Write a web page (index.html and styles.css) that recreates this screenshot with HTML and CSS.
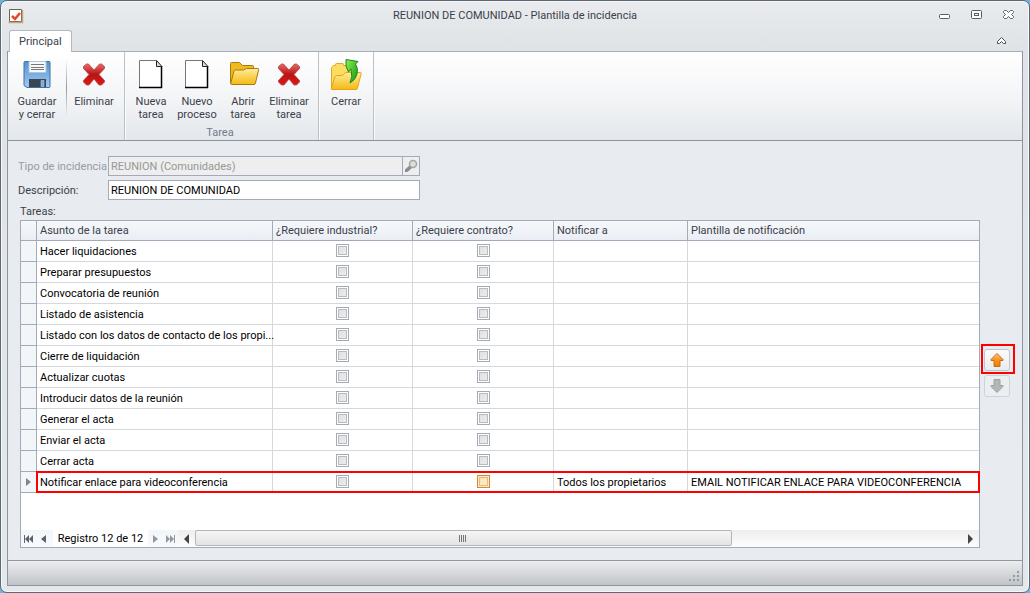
FILE: index.html
```html
<!DOCTYPE html>
<html lang="es">
<head>
    <meta charset="UTF-8">
    <meta name="viewport" content="width=device-width, initial-scale=1.0">
    <title>REUNION DE COMUNIDAD - Plantilla de incidencia</title>
    <link rel="stylesheet" href="styles.css">
</head>
<body>
    <!-- Shared icons -->
    <svg class="defs" width="0" height="0" aria-hidden="true">
        <defs>
            <linearGradient id="red" x1="0" y1="0" x2="0" y2="1">
                <stop offset="0" stop-color="#e86a6a"/>
                <stop offset=".5" stop-color="#b81414"/>
                <stop offset="1" stop-color="#e01818"/>
            </linearGradient>
            <linearGradient id="blue" x1="0" y1="0" x2="0" y2="1">
                <stop offset="0" stop-color="#5592cc"/>
                <stop offset="1" stop-color="#9ecbf5"/>
            </linearGradient>
            <linearGradient id="gold" x1="0" y1="0" x2="0" y2="1">
                <stop offset="0" stop-color="#ffec9a"/>
                <stop offset="1" stop-color="#f5b912"/>
            </linearGradient>
            <linearGradient id="green" x1="0" y1="0" x2="1" y2="1">
                <stop offset="0" stop-color="#8ff04a"/>
                <stop offset="1" stop-color="#12901a"/>
            </linearGradient>
            <linearGradient id="orange" x1="0" y1="0" x2="0" y2="1">
                <stop offset="0" stop-color="#fbc48a"/>
                <stop offset=".5" stop-color="#f7941d"/>
                <stop offset="1" stop-color="#ee7d00"/>
            </linearGradient>
        </defs>
        <symbol id="icon-delete" viewBox="0 0 32 32">
            <path d="M5.500 7.500l3-2.500h2l5.500 6 5.500-6h2l3 2.500v2L21 15.500l5.500 6v1.500l-3 3h-2.500l-5-6-5 6H8.500l-3-3v-1.500l5.500-6-5.500-6z" fill="url(#red)" stroke="#b04545" stroke-width=".8"/>
        </symbol>
        <symbol id="icon-page" viewBox="0 0 32 32">
            <path d="M4.500 1.500h17l5 6v21h-22z" fill="#fff"/>
            <path d="M4.500 28V1.500H21" fill="none" stroke="#777"/>
            <path d="M4 28.500h23M26.500 29V7" fill="none" stroke="#000" stroke-width="1.500"/>
            <path d="M21.500 1.500v6h5.500z" fill="#ddd" stroke="#222"/>
        </symbol>
    </svg>

    <div class="window">
        <div class="titlebar">
            <svg class="app-icon" width="16" height="16" viewBox="0 0 16 16">
                <path d="M1.500 1.500h12v12h-12z" fill="#fff" stroke="#6f6250"/>
                <path d="M.5 14.500h14V2" fill="none" stroke="#c2a676" stroke-width="1.500"/>
                <path d="M4 8l3 3 5-6" fill="none" stroke="#e8442a" stroke-width="2.500"/>
            </svg>
            <h1>REUNION DE COMUNIDAD - Plantilla de incidencia</h1>
            <div class="window-buttons">
                <button aria-label="Minimizar"><svg width="12" height="12"><rect x=".5" y="4.500" width="10" height="4" rx="1" fill="#fff" stroke="#555d66"/></svg></button>
                <button aria-label="Maximizar"><svg width="12" height="12"><rect x=".5" y=".5" width="10" height="8" rx="1" fill="#fff" stroke="#555d66"/><rect x="3.500" y="3.500" width="4" height="2" fill="#fff" stroke="#555d66"/></svg></button>
                <button aria-label="Cerrar ventana"><svg width="12" height="12"><path d="M.5 1.500l1-1h2l2 2 2-2h2l1 1v1l-2 2 2 2v1l-1 1h-2l-2-2-2 2h-2l-1-1v-1l2-2-2-2z" fill="#fff" stroke="#555d66"/></svg></button>
            </div>
        </div>

        <div class="tabs">
            <button class="tab">Principal</button>
            <button class="collapse" aria-label="Contraer cinta"><svg width="10" height="8"><path d="M.5 4.500l4-4 4 4v2H6.500l-2-2-2 2H.5z" fill="#fff" stroke="#444c55"/></svg></button>
        </div>

        <div class="panel">
            <div class="ribbon">
                <div class="group">
                    <div class="group-items">
                        <button class="tool tool-save">
                            <svg width="32" height="32" viewBox="0 0 32 32">
                                <path d="M4 2.500h24q1 0 1 1v24q0 1-1 1H6l-3-2V3.500q0-1 1-1z" fill="url(#blue)" stroke="#43719f"/>
                                <path d="M8 2.500h17v11H8z" fill="#f6f8fa" stroke="#adc5dd"/>
                                <path d="M10 5.500h13M10 8.500h13M10 10.500h13" stroke="#777"/>
                                <path d="M8 20h17v8H8z" fill="#3c4650"/>
                                <path d="M20 21.500h3v6h-3z" fill="#6ca7dd" stroke="#cde4f7" stroke-width=".5"/>
                            </svg>
                            <span>Guardar<br>y cerrar</span>
                        </button>
                        <span class="divider"></span>
                        <button class="tool tool-delete">
                            <svg width="32" height="32"><use href="#icon-delete"/></svg>
                            <span>Eliminar</span>
                        </button>
                    </div>
                </div>
                <div class="group group-tasks">
                    <div class="group-items">
                        <button class="tool"><svg width="32" height="32"><use href="#icon-page"/></svg><span>Nueva<br>tarea</span></button>
                        <button class="tool"><svg width="32" height="32"><use href="#icon-page"/></svg><span>Nuevo<br>proceso</span></button>
                        <button class="tool">
                            <svg width="32" height="32" viewBox="0 0 32 32">
                                <path d="M3.500 24V4.500q0-1 1-1h8l3 3h10q1 0 1 1v16z" fill="#f0b91c" stroke="#a87a10"/>
                                <path d="M4.500 25.500q-1 0-.8-1L7 12q.3-1 1.500-1h8l3-1.500h11.500q1 0 .7 1L28.500 24q-.3 1.500-1.500 1.500z" fill="url(#gold)" stroke="#a87a10"/>
                            </svg>
                            <span>Abrir<br>tarea</span>
                        </button>
                        <button class="tool"><svg width="32" height="32"><use href="#icon-delete"/></svg><span>Eliminar<br>tarea</span></button>
                    </div>
                    <div class="group-title">Tarea</div>
                </div>
                <div class="group">
                    <div class="group-items">
                        <button class="tool tool-close">
                            <svg width="32" height="32" viewBox="0 0 32 32">
                                <path d="M1.500 29V8.500l2-2h2v-1q0-1 1-1h6q1 0 1 1v1h9q1 0 1 1V29z" fill="#fddc62" stroke="#e0a820"/>
                                <path d="M2 30.500q-1 0-.7-1L5 17.500q.3-1 1.500-1h6l3-3h15q1 0 .7 1L27.500 29q-.4 1.500-1.500 1.500z" fill="url(#gold)" stroke="#e5a31a"/>
                                <path d="M16 7V.5l12 2-2.500 2.500q3 4 1.500 10-1.500 6-7 9 3-6 1-14l-2.500 3z" fill="url(#green)" stroke="#168a1a"/>
                            </svg>
                            <span>Cerrar</span>
                        </button>
                    </div>
                </div>
            </div>

            <div class="client">
                <form class="fields">
                    <label class="disabled" for="tipo">Tipo de incidencia</label>
                    <div class="lookup">
                        <input id="tipo" type="text" value="REUNION (Comunidades)" disabled>
                        <button type="button" aria-label="Buscar" disabled>
                            <svg width="14" height="14"><path d="M1 12.500v-2L6 6l2.500 2.500L3.500 13H1z" fill="#8c8c8c"/><circle cx="9" cy="5" r="3.500" fill="#ddd" stroke="#a5a5a5" stroke-width="1.500"/></svg>
                        </button>
                    </div>
                    <label for="descripcion">Descripción:</label>
                    <input id="descripcion" type="text" value="REUNION DE COMUNIDAD">
                </form>
                <div class="tasks-label" id="tareas">Tareas:</div>

                <div class="tasks">
                    <div class="grid">
                        <table aria-labelledby="tareas">
                            <colgroup>
                                <col class="col-mark"><col class="col-name"><col class="col-ind"><col class="col-con"><col class="col-notify"><col>
                            </colgroup>
                            <thead>
                                <tr><th></th><th>Asunto de la tarea</th><th>¿Requiere industrial?</th><th>¿Requiere contrato?</th><th>Notificar a</th><th>Plantilla de notificación</th></tr>
                            </thead>
                            <tbody>
                                <tr><td></td><td>Hacer liquidaciones</td><td><input type="checkbox" aria-label="Requiere industrial"></td><td><input type="checkbox" aria-label="Requiere contrato"></td><td></td><td></td></tr>
                                <tr><td></td><td>Preparar presupuestos</td><td><input type="checkbox" aria-label="Requiere industrial"></td><td><input type="checkbox" aria-label="Requiere contrato"></td><td></td><td></td></tr>
                                <tr><td></td><td>Convocatoria de reunión</td><td><input type="checkbox" aria-label="Requiere industrial"></td><td><input type="checkbox" aria-label="Requiere contrato"></td><td></td><td></td></tr>
                                <tr><td></td><td>Listado de asistencia</td><td><input type="checkbox" aria-label="Requiere industrial"></td><td><input type="checkbox" aria-label="Requiere contrato"></td><td></td><td></td></tr>
                                <tr><td></td><td>Listado con los datos de contacto de los propi...</td><td><input type="checkbox" aria-label="Requiere industrial"></td><td><input type="checkbox" aria-label="Requiere contrato"></td><td></td><td></td></tr>
                                <tr><td></td><td>Cierre de liquidación</td><td><input type="checkbox" aria-label="Requiere industrial"></td><td><input type="checkbox" aria-label="Requiere contrato"></td><td></td><td></td></tr>
                                <tr><td></td><td>Actualizar cuotas</td><td><input type="checkbox" aria-label="Requiere industrial"></td><td><input type="checkbox" aria-label="Requiere contrato"></td><td></td><td></td></tr>
                                <tr><td></td><td>Introducir datos de la reunión</td><td><input type="checkbox" aria-label="Requiere industrial"></td><td><input type="checkbox" aria-label="Requiere contrato"></td><td></td><td></td></tr>
                                <tr><td></td><td>Generar el acta</td><td><input type="checkbox" aria-label="Requiere industrial"></td><td><input type="checkbox" aria-label="Requiere contrato"></td><td></td><td></td></tr>
                                <tr><td></td><td>Enviar el acta</td><td><input type="checkbox" aria-label="Requiere industrial"></td><td><input type="checkbox" aria-label="Requiere contrato"></td><td></td><td></td></tr>
                                <tr><td></td><td>Cerrar acta</td><td><input type="checkbox" aria-label="Requiere industrial"></td><td><input type="checkbox" aria-label="Requiere contrato"></td><td></td><td></td></tr>
                                <tr class="current"><td><svg width="5" height="8"><path d="M0 0l5 4-5 4z" fill="#7d8590"/></svg></td><td>Notificar enlace para videoconferencia</td><td><input type="checkbox" aria-label="Requiere industrial"></td><td><input class="hot" type="checkbox" aria-label="Requiere contrato"></td><td>Todos los propietarios</td><td>EMAIL NOTIFICAR ENLACE PARA VIDEOCONFERENCIA</td></tr>
                            </tbody>
                        </table>

                        <div class="navigator">
                            <button aria-label="Primero"><svg width="10" height="8"><path d="M0 0h1v8H0zM5 0v8L1 4zM9 0v8L5 4z" fill="#5a626c"/></svg></button>
                            <button aria-label="Anterior"><svg width="5" height="8"><path d="M5 0v8L0 4z" fill="#5a626c"/></svg></button>
                            <span class="record">Registro 12 de 12</span>
                            <button aria-label="Siguiente" disabled><svg width="5" height="8"><path d="M0 0l5 4-5 4z" fill="#9299a2"/></svg></button>
                            <button aria-label="Último" disabled><svg width="10" height="8"><path d="M0 0l4 4-4 4zM4 0l4 4-4 4zM8 0h1v8H8z" fill="#9299a2"/></svg></button>
                            <div class="scrollbar">
                                <button aria-label="Desplazar a la izquierda"><svg width="5" height="10"><path d="M5 0v10L0 5z" fill="#444"/></svg></button>
                                <div class="track"><div class="thumb"><svg width="8" height="7"><path d="M.5 0v7M2.500 0v7M4.500 0v7M6.500 0v7" stroke="#777"/></svg></div></div>
                                <button aria-label="Desplazar a la derecha"><svg width="5" height="10"><path d="M0 0v10l5-5z" fill="#444"/></svg></button>
                            </div>
                        </div>
                    </div>

                    <div class="move">
                        <div class="highlight">
                            <button aria-label="Subir"><svg width="14" height="14"><path d="M7 .5l6 6v1h-3v6H4v-6H1v-1z" fill="url(#orange)" stroke="#c96f12"/></svg></button>
                        </div>
                        <button aria-label="Bajar" disabled><svg width="14" height="14"><path d="M7 13.500l6-6v-1h-3v-6H4v6H1v1z" fill="#b5b5b5" stroke="#a0a0a0"/></svg></button>
                    </div>
                </div>
            </div>

            <div class="statusbar">
                <svg width="11" height="11"><path d="M8 0h2v2H8zM4 4h2v2H4zM8 4h2v2H8zM0 8h2v2H0zM4 8h2v2H4zM8 8h2v2H8z" fill="#9498a0"/></svg>
            </div>
        </div>
    </div>
</body>
</html>
```
FILE: styles.css
```css
* {
    margin: 0;
    padding: 0;
    box-sizing: border-box;
}

body {
    font-family: Tahoma, Roboto, 'DejaVu Sans', sans-serif;
    font-size: 11px;
    line-height: 13px;
    color: #3b3f4a;
    background: #69b3e8;
}

button,
input {
    font: inherit;
    color: inherit;
}

button {
    background: none;
    border: none;
}

svg {
    display: block;
}

.defs {
    position: absolute;
}

/* window frame */
.window {
    display: flex;
    flex-direction: column;
    min-height: 100vh;
    padding: 0 6px 6px;
    border: 1px solid #5e6874;
    border-radius: 7px;
    background: linear-gradient(#e9ebee, #dfe3e6 50px, #e3e8eb);
    box-shadow: inset 0 0 0 1px #f7f8f9;
}

.titlebar {
    display: grid;
    grid-template-columns: 80px 1fr 80px;
    align-items: center;
    height: 29px;
}

.app-icon {
    margin-left: 1px;
}

.titlebar h1 {
    font-size: 11px;
    font-weight: normal;
    text-align: center;
}

.window-buttons {
    display: flex;
    justify-content: flex-end;
    gap: 20px;
    padding-right: 8px;
}

.tabs {
    display: flex;
    justify-content: space-between;
    height: 21px;
    padding: 0 16px 0 2px;
}

.tab {
    position: relative;
    height: 22px;
    padding: 0 9px;
    background: #fff;
    border: 1px solid #b3b9c1;
    border-bottom: none;
    border-radius: 3px 3px 0 0;
    z-index: 1;
}

.panel {
    flex: 1;
    display: flex;
    flex-direction: column;
    border: 1px solid #8c95a0;
    border-top-color: #a9afb7;
}

/* ribbon */
.ribbon {
    display: flex;
    height: 89px;
    background: linear-gradient(#fff, #f4f5f7 50%, #e3e7eb);
    border-bottom: 1px solid #8b939d;
}

.group {
    display: flex;
    flex-direction: column;
    justify-content: space-between;
    padding: 7px 3px 1px;
    border-right: 1px solid #bcc1c8;
    box-shadow: 1px 0 #fafbfc;
}

.group-tasks {
    padding-right: 6px;
}

.group-items {
    display: flex;
}

.tool {
    display: flex;
    flex-direction: column;
    align-items: center;
    gap: 4px;
    width: 46px;
    text-align: center;
}

.tool-save {
    width: 52px;
}

.tool-delete {
    width: 54px;
}

.tool-close {
    width: 48px;
}

.divider {
    width: 1px;
    height: 58px;
    margin-left: 3px;
    background: linear-gradient(transparent, #9298a1, transparent);
}

.group-title {
    text-align: center;
    color: #737990;
}

/* form */
.client {
    flex: 1;
    display: flex;
    flex-direction: column;
    padding: 15px 7px 12px 12px;
    background: #e8ebf0;
}

.fields {
    display: grid;
    grid-template-columns: 90px 312px;
    row-gap: 4px;
    align-items: center;
    margin-left: -2px;
    white-space: nowrap;
}

.fields .disabled {
    color: #979ba3;
}

.fields input {
    height: 20px;
    padding: 0 2px;
    border: 1px solid #a3abb8;
    background: #fff;
    color: #000;
    min-width: 0;
}

.fields .lookup input {
    flex: 1;
    background: #eee;
    color: #979797;
}

.lookup {
    display: flex;
}

.lookup button {
    width: 17px;
    padding-left: 1px;
    border: 1px solid #a3abb8;
    border-left: none;
    background: #eee;
}

.tasks-label {
    margin: 5px 0 2px;
}

/* task table */
.tasks {
    flex: 1;
    display: flex;
    gap: 1px;
}

.grid {
    flex: 1;
    display: flex;
    flex-direction: column;
    justify-content: space-between;
    border: 1px solid #a3abb8;
    background: #fff;
}

table {
    width: 100%;
    table-layout: fixed;
    border-collapse: separate;
    border-spacing: 0;
}

.col-mark { width: 16px; }
.col-name { width: 236px; }
.col-ind { width: 140px; }
.col-con { width: 141px; }
.col-notify { width: 134px; }

th,
td {
    height: 21px;
    padding: 0 0 0 3px;
    white-space: nowrap;
    text-align: left;
}

th {
    height: 20px;
    font-weight: normal;
    background: linear-gradient(#f6f8fb, #eaeef4);
    border-right: 1px solid #a3abb8;
    border-bottom: 1px solid #a3abb8;
}

td {
    color: #000;
    border-right: 1px solid #d5d9dd;
    border-bottom: 1px solid #d5d9dd;
}

th:last-child,
td:last-child {
    border-right: none;
}

td:first-child {
    padding: 0 5px;
    background: #f3f6f9;
    border-color: #a3abb8;
}

td:nth-child(3),
td:nth-child(4) {
    padding: 0 0 2px;
}

input[type="checkbox"] {
    appearance: none;
    display: block;
    width: 13px;
    height: 13px;
    margin: 0 auto;
    border: 1px solid #a3abb8;
    background: linear-gradient(135deg, #ddd, #f0f0f0);
    box-shadow: inset 0 0 0 1px #fff, inset 0 0 0 2px #bbb;
}

input[type="checkbox"].hot {
    border-color: #cc8e35;
    background: linear-gradient(135deg, #fbe0b0, #fdf1d8);
    box-shadow: inset 0 0 0 1px #fdeccb, inset 0 0 0 2px #f3b573;
}

/* red frame over the current row */
.current {
    position: relative;
}

.current td:last-child::after {
    content: '';
    position: absolute;
    inset: -1px -1px 0 15px;
    border: 2px solid #f00;
    pointer-events: none;
}

/* record navigator and scrollbar */
.navigator {
    display: flex;
    height: 17px;
    background: linear-gradient(#f3f6f9, #f8fafc);
}

.navigator button {
    display: flex;
    align-items: center;
    justify-content: center;
    width: 15px;
}

.navigator .scrollbar button {
    width: 17px;
}

.record {
    width: 95px;
    margin-left: 2px;
    line-height: 17px;
    text-align: center;
    color: #000;
    background: #fff;
}

.scrollbar {
    flex: 1;
    display: flex;
    background: linear-gradient(#eee, #fdfdfd);
}

.track {
    flex: 1;
}

.thumb {
    display: flex;
    align-items: center;
    justify-content: center;
    width: 70%;
    height: 16px;
    border: 1px solid #b3b7bd;
    border-radius: 2px;
    background: linear-gradient(#f5f5f5, #e4e4e4);
}

/* order buttons */
.move {
    display: flex;
    flex-direction: column;
    justify-content: center;
    gap: 1px;
    padding-bottom: 28px;
}

.highlight {
    border: 2px solid #f00;
    padding: 3px 3px 1px 1px;
}

.move button {
    display: flex;
    align-items: center;
    justify-content: center;
    width: 26px;
    height: 22px;
    border: 1px solid #c0c5cc;
    border-radius: 3px;
    background: linear-gradient(#fafbfc, #e9ecf0);
}

.move button:disabled {
    margin-left: 3px;
    background: #eceff2;
    border-color: #d0d4da;
}

.statusbar {
    display: flex;
    align-items: flex-end;
    justify-content: flex-end;
    height: 25px;
    padding: 3px 2px;
    border-top: 1px solid #8f99a5;
    background: linear-gradient(#ecedef, #c1c4c8);
}
```
